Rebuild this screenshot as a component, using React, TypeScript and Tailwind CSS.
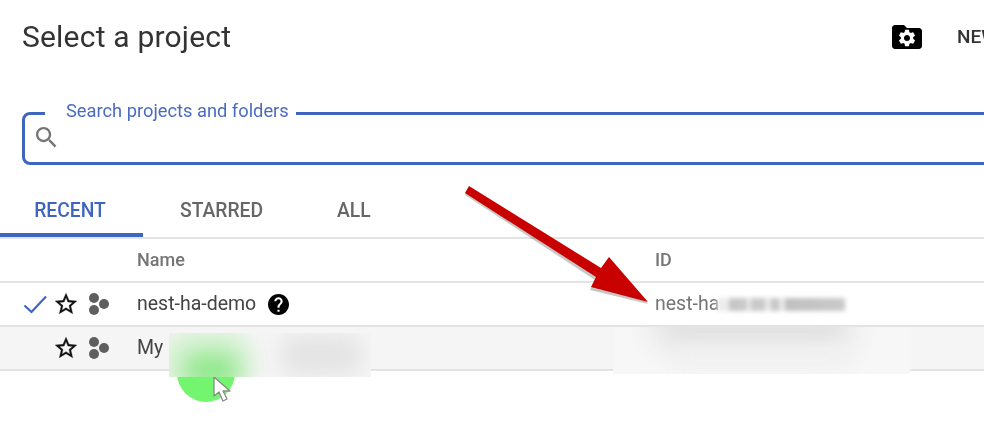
import React from "react";

const starPath = "M22 9.24l-7.19-.62L12 2 9.19 8.63 2 9.24l5.46 4.73L5.82 21 12 17.27 18.18 21l-1.63-7.03L22 9.24zM12 15.4l-3.76 2.27 1-4.28-3.32-2.88 4.38-.38L12 6.1l1.71 4.04 4.38.38-3.32 2.88 1 4.28L12 15.4z";
const gearPath = "M19.14 12.94c.04-.3.06-.61.06-.94 0-.32-.02-.64-.07-.94l2.03-1.58c.18-.14.23-.41.12-.61l-1.92-3.32c-.12-.22-.37-.29-.59-.22l-2.39.96c-.5-.38-1.03-.7-1.62-.94l-.36-2.54c-.04-.24-.24-.41-.48-.41h-3.84c-.24 0-.43.17-.47.41l-.36 2.54c-.59.24-1.13.57-1.62.94l-2.39-.96c-.22-.08-.47 0-.59.22L2.74 8.87c-.12.21-.08.47.12.61l2.03 1.58c-.05.3-.09.63-.09.94s.02.64.07.94l-2.03 1.58c-.18.14-.23.41-.12.61l1.92 3.32c.12.22.37.29.59.22l2.39-.96c.5.38 1.03.7 1.62.94l.36 2.54c.05.24.24.41.48.41h3.84c.24 0 .44-.17.47-.41l.36-2.54c.59-.24 1.13-.56 1.62-.94l2.39.96c.22.08.47 0 .59-.22l1.92-3.32c.12-.22.07-.47-.12-.61l-2.01-1.58zM12 15.6c-1.98 0-3.6-1.62-3.6-3.6s1.62-3.6 3.6-3.6 3.6 1.62 3.6 3.6-1.62 3.6-3.6 3.6z";

function Star() {
  return (
    <svg viewBox="0 0 24 24" className="w-[26px] h-[26px] shrink-0" fill="#111" stroke="#111" strokeWidth="0.3">
      <path d={starPath} />
    </svg>
  );
}

function Org() {
  return (
    <svg viewBox="0 0 20 22" className="w-[20px] h-[22px] shrink-0" fill="#5f5f5f">
      <circle cx="5" cy="5" r="5" />
      <circle cx="5" cy="17" r="5" />
      <circle cx="15" cy="11" r="5" />
    </svg>
  );
}

function Row({ check, children, id, active }: { check?: boolean; children: React.ReactNode; id?: React.ReactNode; active?: boolean }) {
  return (
    <div className={`flex items-center h-[44px] border-b-2 border-[#e3e3e3] ${active ? "bg-[#f5f5f5]" : ""}`}>
      <div className="w-[53px] pl-[23px] shrink-0">
        {check && (
          <svg viewBox="0 0 24 24" className="w-[24px] h-[24px]" fill="none" stroke="#3f65bf" strokeWidth="2.2">
            <path d="M1.5 13.5 L8.5 20 L23 4.5" />
          </svg>
        )}
      </div>
      <Star />
      <div className="w-[10px] shrink-0" />
      <Org />
      <div className="w-[28px] shrink-0" />
      <div className="w-[518px] shrink-0 flex items-center text-[19.5px] text-[#444444]">{children}</div>
      <div className="text-[19.5px] text-[#757575]">{id}</div>
    </div>
  );
}

export default function App() {
  return (
    <div className="relative w-[984px] h-[441px] overflow-hidden bg-white font-['Roboto',sans-serif] blur-[0.4px]">
      <header className="flex items-center h-[74px] pl-[22px]">
        <h1 className="text-[30px] leading-[36px] text-[#333333] font-normal tracking-[0.2px]">Select a project</h1>
        <div className="ml-auto flex items-center shrink-0 w-[92px] gap-[35px]">
          <svg viewBox="2 4 20 16" className="w-[30px] h-[24px] shrink-0">
            <path d="M10 4H4c-1.1 0-2 .9-2 2v12c0 1.1.9 2 2 2h16c1.1 0 2-.9 2-2V8c0-1.1-.9-2-2-2h-8l-2-2z" fill="#000" />
            <g transform="translate(5.16 5.83) scale(0.57)">
              <path d={gearPath} fill="#fff" />
            </g>
          </svg>
          <span className="text-[19px] font-medium text-[#333333] whitespace-nowrap">NEW</span>
        </div>
      </header>

      <div className="pl-[22px] mt-[29px]">
        <fieldset className="w-[1000px] h-[62px] border-[3px] border-[#3f65bf] rounded-l-[8px] pl-[11px] flex items-center">
          <legend className="ml-[9px] pl-[21px] pr-[7px] text-[18.3px] leading-[16px] pb-[4px] text-[#4a6cc0]">Search projects and folders</legend>
          <svg viewBox="3 3 18 18" className="w-[21px] h-[21px] -mt-[11px]" fill="#757575">
            <path d="M15.5 14h-.79l-.28-.27C15.41 12.59 16 11.11 16 9.5 16 5.91 13.09 3 9.5 3S3 5.91 3 9.5 5.91 16 9.5 16c1.61 0 3.09-.59 4.23-1.57l.27.28v.79l5 4.99L20.49 19l-4.99-5zm-6 0C7.01 14 5 11.99 5 9.5S7.01 5 9.5 5 14 7.01 14 9.5 11.99 14 9.5 14z" />
          </svg>
        </fieldset>
      </div>

      <nav className="flex h-[63px] mt-[11px] border-b-2 border-[#e3e3e3] text-[19.3px] font-medium">
        <div className="w-[143px] pt-[13px] pr-[3px] flex items-center justify-center text-[#3f65bf] border-b-[4px] border-[#3f65bf]">RECENT</div>
        <div className="w-[157px] pl-[37px] pt-[10px] flex items-center text-[#666666]">STARRED</div>
        <div className="pl-[37px] pt-[10px] flex items-center text-[#666666]">ALL</div>
      </nav>

      <div className="flex items-center h-[44px] pb-[1px] border-b-2 border-[#e3e3e3] text-[18px] font-medium text-[#757575]">
        <div className="w-[137px] shrink-0" />
        <div className="w-[518px] shrink-0">Name</div>
        <div>ID</div>
      </div>

      <Row
        check
        id={
          <span className="flex items-center">
            <span>nest-ha</span>
            <span className="ml-[-2px] w-[128px] h-[13px] blur-[2px] bg-[linear-gradient(90deg,#ececec_0,#ececec_12px,#c4c4c4_12px,#cccccc_30px,#e8e8e8_30px,#e8e8e8_34px,#cacaca_34px,#cacaca_48px,#e8e8e8_48px,#e8e8e8_54px,#c8c8c8_54px,#c8c8c8_62px,#e8e8e8_62px,#e8e8e8_68px,#c0c0c0_68px,#cacaca_128px)]" />
          </span>
        }
      >
        <span>nest-ha-demo</span>
        <svg viewBox="2 2 20 20" className="ml-[12px] w-[21px] h-[21px]" fill="#000">
          <path d="M12 2C6.48 2 2 6.48 2 12s4.48 10 10 10 10-4.48 10-10S17.52 2 12 2zm1 17h-2v-2h2v2zm2.07-7.75l-.9.92C13.45 12.9 13 13.5 13 15h-2v-.5c0-1.1.45-2.1 1.17-2.83l1.24-1.26c.37-.36.59-.86.59-1.41 0-1.1-.9-2-2-2s-2 .9-2 2H8c0-2.21 1.79-4 4-4s4 1.79 4 4c0 .88-.36 1.68-.93 2.25z" />
        </svg>
      </Row>
      <Row active id=" ">
        <span>My</span>
      </Row>

      {/* Green pointer highlight and cursor */}
      <div className="absolute left-[177px] top-[344px] w-[58px] h-[58px] rounded-full bg-[#74f56f]" />
      <svg viewBox="0 0 24 28" className="absolute left-[212px] top-[375px] w-[24px] h-[28px]">
        <path d="M2 2 L2 21 L7 17 L11 26 L15 24 L11 16 L18 16 Z" fill="#fff" stroke="#8a8a8a" strokeWidth="1.3" strokeLinejoin="round" />
      </svg>

      {/* Blurred-out redactions */}
      <div className="absolute left-[169px] top-[333px] w-[202px] h-[44px] overflow-hidden bg-[#f5f5f5]">
        <div className="absolute left-[-10px] top-[-6px] w-[95px] h-[70px] rounded-full bg-[#d9f2d6] blur-[10px]" />
        <div className="absolute left-[14px] top-[20px] w-[56px] h-[34px] rounded-full bg-[#8fe88b] blur-[11px]" />
        <div className="absolute left-[112px] top-[2px] w-[80px] h-[40px] rounded-[12px] bg-[#e4e4e4] blur-[10px]" />
      </div>
      <div className="absolute left-[613px] top-[327px] w-[297px] h-[47px] overflow-hidden bg-[#f7f7f7]">
        <div className="absolute left-[40px] -top-[24px] w-[200px] h-[44px] rounded-full bg-[#e0e0e0] blur-[14px]" />
        <div className="absolute left-[60px] top-[22px] w-[180px] h-[18px] rounded-full bg-[#f1f1f1] blur-[8px]" />
      </div>

      {/* Annotation arrow */}
      <svg viewBox="0 0 984 441" className="absolute inset-0 w-[984px] h-[441px] pointer-events-none">
        <polygon points="468,188 465,195 595,280 590,290 648,304 609,260 601,271" fill="#000" opacity="0.22" />
        <polygon points="469,186 465,193 596,277 591,287 648,302 609,257 601,268" fill="#c80000" />
      </svg>
    </div>
  );
}
